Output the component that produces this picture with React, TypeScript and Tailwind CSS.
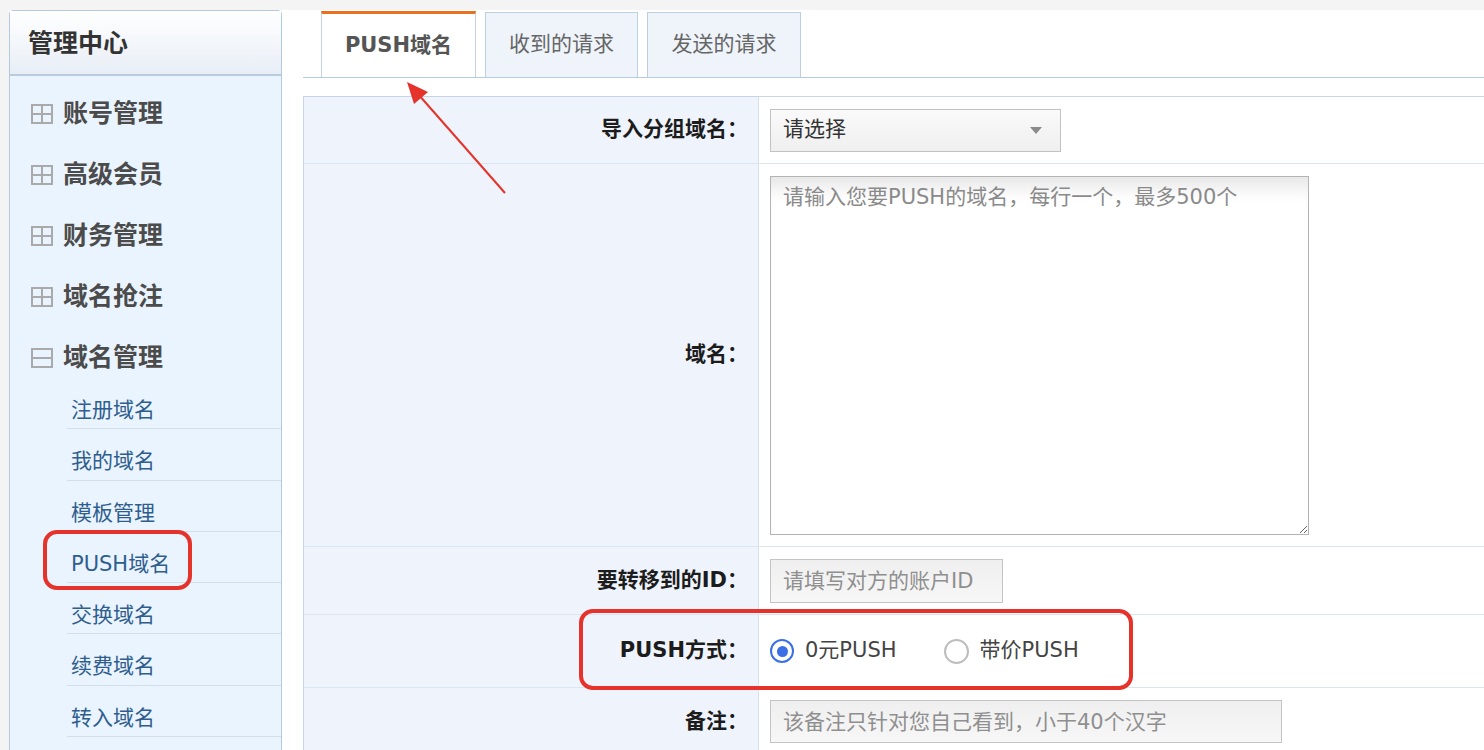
import React from "react";

const font = "font-['DejaVu_Sans','Noto_Sans_CJK_SC',sans-serif]";

const mainMenu = [
  { label: "账号管理", open: false },
  { label: "高级会员", open: false },
  { label: "财务管理", open: false },
  { label: "域名抢注", open: false },
  { label: "域名管理", open: true },
];

const subMenu = ["注册域名", "我的域名", "模板管理", "PUSH域名", "交换域名", "续费域名", "转入域名"];

function GridIcon({ open }: { open: boolean }) {
  return (
    <svg width="22" height="20" viewBox="0 0 22 20" className="shrink-0">
      <rect x="1" y="1" width="20" height="18" fill="none" stroke="#aaaaaa" strokeWidth="2" />
      <line x1="1" y1="10" x2="21" y2="10" stroke="#aaaaaa" strokeWidth="2" />
      {!open && <line x1="11" y1="1" x2="11" y2="19" stroke="#aaaaaa" strokeWidth="2" />}
    </svg>
  );
}

function Sidebar() {
  return (
    <aside className="w-[273px] shrink-0 rounded-t-[4px] border border-[#b4c9dc] bg-[#eaf4fe]">
      <div className="flex h-[65px] items-center border-b-2 border-[#b9cbdc] bg-gradient-to-b from-white to-[#e8eef6] pl-[18px] pt-[3px] text-[25px] font-bold text-[#333]">
        管理中心
      </div>
      <div className="pt-[7px]">
        {mainMenu.map((m) => (
          <div key={m.label} className="flex h-[61px] items-center gap-[10px] pl-[21px]">
            <GridIcon open={m.open} />
            <span className="text-[25px] font-bold leading-none text-[#4b4b4b]">{m.label}</span>
          </div>
        ))}
      </div>
      <div className="-mt-[10px] pl-[57px]">
        {subMenu.map((s) => (
          <div
            key={s}
            className="h-[51.3px] border-b border-[#d2dfeb] pl-[4px] pt-[20px] text-[21px] leading-[24px] text-[#2f5e8e]"
          >
            {s}
          </div>
        ))}
      </div>
    </aside>
  );
}

function Tabs() {
  return (
    <div className="flex items-end gap-[9px] border-b border-[#b6cbdd] pl-[18px]">
      <div className="flex h-[66px] w-[155px] items-center justify-center border-x border-t-[3px] border-x-[#c3d3e2] border-t-[#e8701e] bg-white text-[21px] font-bold text-[#555]">
        PUSH域名
      </div>
      <div className="flex h-[65px] w-[153px] items-center justify-center border-x border-t border-[#bcd0e2] bg-[#eff4fb] text-[21px] text-[#666]">
        收到的请求
      </div>
      <div className="flex h-[65px] w-[154px] items-center justify-center border-x border-t border-[#bcd0e2] bg-[#eff4fb] text-[21px] text-[#666]">
        发送的请求
      </div>
    </div>
  );
}

function Row({
  label,
  height,
  children,
}: {
  label: string;
  height: string;
  children: React.ReactNode;
}) {
  return (
    <div className={`flex border-b border-[#dbe5ef] ${height}`}>
      <div className="flex w-[455px] shrink-0 items-center justify-end border-r border-[#d5e1ed] bg-[#eff4fc] pr-[10px] text-[21px] font-bold text-[#1c1c1c]">
        {label}
      </div>
      <div className="flex flex-1 items-center pl-[11px]">{children}</div>
    </div>
  );
}

function Form() {
  return (
    <div className="mt-[18px] border-l border-t border-[#c5d6e7]">
      <Row label="导入分组域名：" height="h-[67px]">
        <div className="flex h-[43px] w-[291px] items-center justify-between border border-[#c2c2c2] bg-gradient-to-b from-[#fafafa] to-[#efefef] pl-[12px] pr-[18px] text-[21px] text-[#333]">
          <span>请选择</span>
          <span className="h-0 w-0 border-x-[6px] border-t-[7px] border-x-transparent border-t-[#8a8a8a]" />
        </div>
      </Row>
      <Row label="域名：" height="h-[383px]">
        <textarea
          className="h-[359px] w-[539px] resize-y border border-[#b3b3b3] px-[12px] pt-[6px] text-[21px] leading-[28px] text-[#333] shadow-[inset_0_22px_18px_-12px_rgba(0,0,0,0.10)] outline-none placeholder:text-[#8a8a8a]"
          placeholder="请输入您要PUSH的域名，每行一个，最多500个"
        />
      </Row>
      <Row label="要转移到的ID：" height="h-[68px]">
        <input
          className="h-[44px] w-[233px] border border-[#c4c4c4] bg-gradient-to-b from-[#efefef] to-[#f7f7f7] px-[12px] text-[21px] outline-none placeholder:text-[#8f8f8f]"
          placeholder="请填写对方的账户ID"
        />
      </Row>
      <Row label="PUSH方式：" height="h-[73px]">
        <div className="flex items-center text-[21px] text-[#444]">
          <span className="flex h-[24px] w-[24px] items-center justify-center rounded-full border-2 border-[#3b6fe5] bg-white">
            <span className="h-[11px] w-[11px] rounded-full bg-[#3b6fe5]" />
          </span>
          <span className="ml-[11px]">0元PUSH</span>
          <span className="ml-[47px] h-[25px] w-[25px] rounded-full border-2 border-[#bdbdbd] bg-white" />
          <span className="ml-[11px]">带价PUSH</span>
        </div>
      </Row>
      <Row label="备注：" height="h-[68px]">
        <input
          className="h-[43px] w-[512px] border border-[#c4c4c4] bg-gradient-to-b from-[#efefef] to-[#f7f7f7] px-[12px] text-[21px] outline-none placeholder:text-[#8f8f8f]"
          placeholder="该备注只针对您自己看到，小于40个汉字"
        />
      </Row>
    </div>
  );
}

export default function App() {
  return (
    <div className={`relative h-[750px] w-[1484px] overflow-hidden bg-white ${font}`}>
      <div className="h-[10px] bg-[#f4f4f4]" />
      <div className="flex">
        <div className="w-[9px] shrink-0 self-stretch bg-[#f4f4f4]" />
        <Sidebar />
        <main className="ml-[21px] flex-1 pt-[1px]">
          <Tabs />
          <Form />
        </main>
      </div>

      {/* annotations */}
      <div className="pointer-events-none absolute left-[43px] top-[530px] h-[60px] w-[149px] rounded-[14px] border-4 border-[#e5322b]" />
      <div className="pointer-events-none absolute left-[579px] top-[609px] h-[81px] w-[554px] rounded-[14px] border-4 border-[#e5322b]" />
      <svg className="pointer-events-none absolute left-0 top-0" width="1484" height="750">
        <line x1="505" y1="193" x2="418" y2="94" stroke="#e5322b" strokeWidth="2" />
        <polygon points="407,82 428,92 414,104" fill="#e5322b" />
      </svg>
    </div>
  );
}
